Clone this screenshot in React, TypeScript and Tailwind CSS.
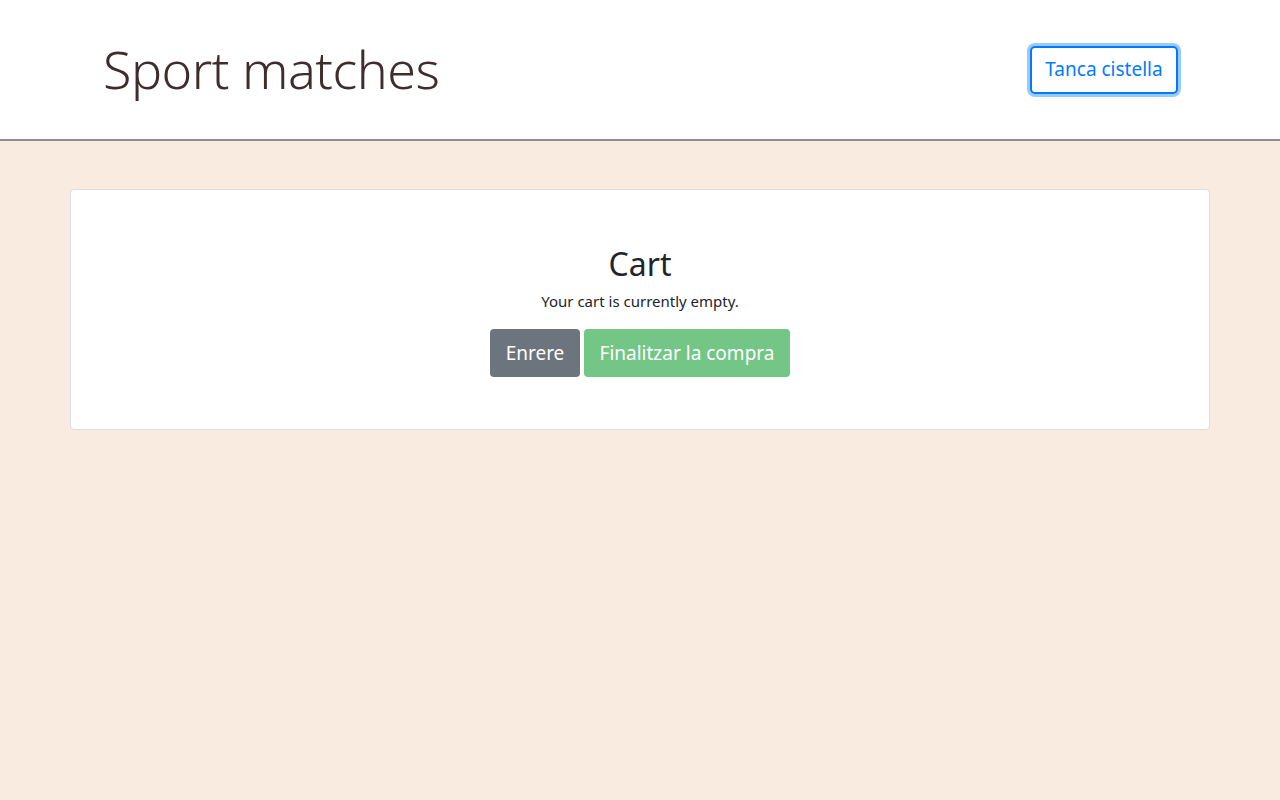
import React from "react";

export default function App() {
  const font = { fontFamily: '"Noto Sans", "Open Sans", sans-serif' };
  return (
    <div className="min-h-[800px] bg-[#f9ebe0] flex flex-col" style={font}>
      <header className="bg-white h-[141px] border-b-2 border-[#8c8c8c] flex items-center justify-between pl-[103px] pr-[102px]">
        <h1 className="text-[52px] font-light text-[#3f2d2e] leading-none tracking-[-0.5px] mt-[-1px]">Sport matches</h1>
        <button className="h-[48px] w-[148px] border-2 border-[#007bff] rounded-[5px] text-[#007bff] text-[19px] bg-white shadow-[0_0_0_3px_rgba(0,123,255,0.4)]">
          Tanca cistella
        </button>
      </header>
      <main className="px-[70px] pt-[48px]">
        <div className="bg-white border border-[#dedede] rounded-[4px] h-[241px] flex flex-col items-center pt-[55px]">
          <h2 className="text-[32px] text-[#212529] leading-[1.2]">Cart</h2>
          <p className="text-[15px] text-[#212529] mt-[7px]">Your cart is currently empty.</p>
          <div className="flex gap-[4px] mt-[16px]">
            <button className="h-[48px] w-[90px] rounded-[4px] bg-[#6c757d] text-white text-[19px]">Enrere</button>
            <button className="h-[48px] w-[206px] rounded-[4px] bg-[#73c686] text-white text-[19px]">Finalitzar la compra</button>
          </div>
        </div>
      </main>
    </div>
  );
}
